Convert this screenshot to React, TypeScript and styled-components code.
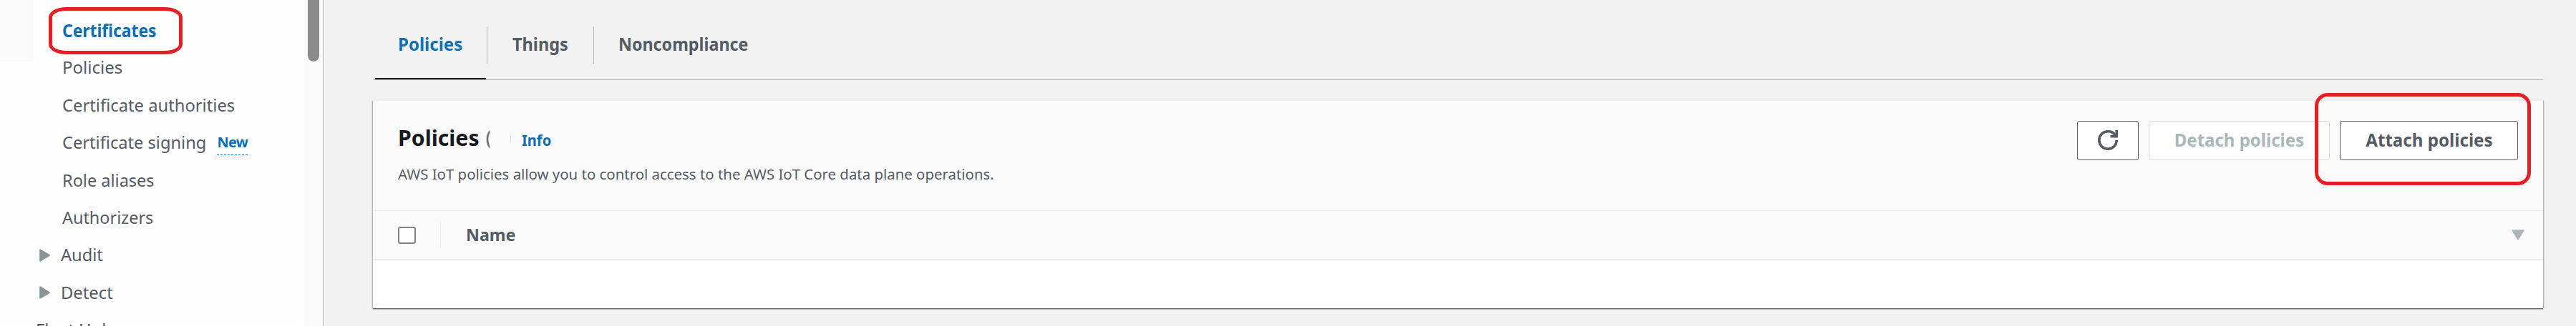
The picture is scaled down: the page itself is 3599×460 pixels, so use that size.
import React from 'react';
import styled, { createGlobalStyle, css } from 'styled-components';

const GlobalStyle = createGlobalStyle`
  *, *::before, *::after { box-sizing: border-box; }
  html, body { margin: 0; background: #fff; }
  body {
    height: 460px;
    overflow: hidden;
    font-family: 'Noto Sans', 'Open Sans', sans-serif;
    color: #545b64;
  }
`;

const Page = styled.div`
  display: flex;
  height: 456px;
  width: 3599px;
  overflow: hidden;
  position: relative;
`;

/* Sidebar */
const Sidebar = styled.aside`
  display: flex;
  flex: none;
  width: 452px;
  background: #fefefe;
  border-right: 1px solid #b4b6b6;
`;

const Rail = styled.div`
  flex: none;
  width: 46.5px;
  height: 86px;
  background: #fafafa;
`;

const Nav = styled.nav`
  flex: 1;
  padding-top: 16px;
`;

const NavItem = styled.a<{ $level: 'root' | 'group' | 'leaf'; $active?: boolean }>`
  display: flex;
  align-items: center;
  height: 52.4px;
  padding-left: ${({ $level }) => ({ root: 3, group: 8, leaf: 40.5 })[$level]}px;
  font-size: 24px;
  line-height: 52.4px;
  white-space: nowrap;
  ${({ $active }) =>
    $active &&
    css`
      font-size: 25px;
      font-weight: 700;
      color: #0a6eb4;
    `}
`;

const Label = styled.span<{ $stretch: number }>`
  display: inline-block;
  white-space: nowrap;
  transform: scaleX(${({ $stretch }) => $stretch});
  transform-origin: left center;
`;

const NewTag = styled.span`
  margin: 5px 0 0 12px;
  height: 31px;
  border-bottom: 1px dashed #1478b8;
  font-size: 20px;
  font-weight: 700;
  line-height: 26px;
  letter-spacing: -0.7px;
  color: #0a6eb4;
`;

const Caret = styled.svg`
  flex: none;
  width: 15px;
  height: 18px;
  margin-right: 15px;
  fill: #879596;
  stroke: #879596;
  stroke-width: 2;
  stroke-linejoin: round;
`;

const ScrollTrack = styled.div`
  flex: none;
  width: 26px;
  padding-left: 5px;
  background: #fafafa;
`;

const ScrollThumb = styled.div`
  width: 16px;
  height: 86px;
  background: #8b8b8b;
  border-radius: 0 0 8px 8px;
`;

/* Main column */
const Main = styled.main`
  flex: 1;
  min-width: 0;
  padding: 0 46px 0 69px;
  background: #f2f2f2;
`;

const Tabs = styled.div`
  display: flex;
  height: 112px;
  padding: 15px 0 0 3px;
  border-bottom: 1px solid #aab7b8;
`;

const Tab = styled.div<{ $width: number; $active?: boolean }>`
  flex: none;
  width: ${({ $width }) => $width}px;
  height: 96px;
  padding: 22px 0 0 34.5px;
  font-size: 24.5px;
  font-weight: 700;
  line-height: 50px;
  color: #545b64;
  ${({ $active }) =>
    $active &&
    css`
      padding-left: 32px;
      color: #0f72b6;
      border-bottom: 2px solid #16191f;
    `}
`;

const TabDivider = styled.div`
  flex: none;
  width: 1px;
  height: 52px;
  margin: 22px 0 0 1px;
  background: #aab7b8;
`;

const Card = styled.section`
  margin-top: 28px;
  height: 291px;
  background: #fff;
  border-top: 1px solid #eaeded;
  box-shadow: 0 1px 1px 0 rgba(0, 28, 36, 0.5), 1px 1px 2px 0 rgba(0, 28, 36, 0.3),
    -1px 1px 2px 0 rgba(0, 28, 36, 0.25);
`;

const CardHeader = styled.header`
  display: flex;
  justify-content: space-between;
  height: 154px;
  padding: 28px 35px 0 34.5px;
  background: #fafafa;
  border-bottom: 1px solid #eaeaea;
`;

const TitleRow = styled.div`
  display: flex;
  height: 48px;
`;

const Title = styled.h2`
  margin: 0;
  width: 123px;
  font-size: 31px;
  font-weight: 700;
  line-height: 47px;
  color: #16191f;
`;

const CounterEdge = styled.span`
  width: 5px;
  overflow: hidden;
  font-size: 29px;
  line-height: 46px;
  color: #687078;
`;

const CounterTail = styled.span`
  width: 1px;
  height: 10px;
  margin: 21px 15px 0 29.5px;
  background: #b5e0f5;
`;

const InfoLink = styled.a`
  font-size: 20.5px;
  font-weight: 700;
  line-height: 54px;
  color: #0f6cb2;
`;

const Description = styled.p`
  margin: 0;
  font-size: 20.5px;
  line-height: 53px;
`;

const Actions = styled.div`
  display: flex;
  gap: 14px;
`;

const Button = styled.button<{ $width: number; $muted?: boolean }>`
  display: flex;
  align-items: center;
  justify-content: center;
  width: ${({ $width }) => $width}px;
  height: 55px;
  padding: 0;
  background: #fff;
  border: 1px solid ${({ $muted }) => ($muted ? '#d5dbdb' : '#545b64')};
  border-radius: 3px;
  font: 700 25px/50px 'Noto Sans', 'Open Sans', sans-serif;
  color: ${({ $muted }) => ($muted ? '#aab7b8' : '#545b64')};
`;

const ButtonText = styled(Label)`
  height: 53px;
  transform-origin: center;
`;

const RefreshGlyph = styled.svg`
  width: 28px;
  height: 28px;
  margin-bottom: 1px;
  fill: none;
  stroke: #545b64;
  stroke-width: 2.1;
`;

const TableHead = styled.div`
  display: flex;
  align-items: center;
  height: 68px;
  padding: 0 26px 0 35px;
  background: #fafafa;
  border-bottom: 1px solid #eaeaea;
`;

const Checkbox = styled.span`
  width: 25px;
  height: 24px;
  background: #fff;
  border: 2px solid #7b8289;
  border-radius: 3px;
`;

const ColumnDivider = styled.span`
  width: 1px;
  height: 35px;
  margin: 0 34.5px 0 34px;
  background: #eaeded;
`;

const ColumnName = styled.span`
  flex: 1;
  margin-bottom: 2px;
  font-size: 24px;
  font-weight: 700;
`;

const SortCaret = styled.svg`
  width: 18px;
  height: 15px;
  fill: #aab7b8;
  stroke: #aab7b8;
  stroke-width: 2;
  stroke-linejoin: round;
`;

/* Callouts floating above the console */
const Callout = styled.div<{ $x: number; $y: number; $w: number; $h: number; $radius: string }>`
  position: absolute;
  left: ${({ $x }) => $x}px;
  top: ${({ $y }) => $y}px;
  width: ${({ $w }) => $w}px;
  height: ${({ $h }) => $h}px;
  border: 5px solid #e41f26;
  border-radius: ${({ $radius }) => $radius};
  pointer-events: none;
`;

const GroupCaret = () => (
  <Caret viewBox="0 0 15 18">
    <path d="M1.2 1.3v15.4L14 9z" />
  </Caret>
);

export default function App() {
  return (
    <>
      <GlobalStyle />
      <Page>
        <Sidebar>
          <Rail />
          <Nav>
            <NavItem $level="leaf" $active><Label $stretch={0.915}>Certificates</Label></NavItem>
            <NavItem $level="leaf"><Label $stretch={1}>Policies</Label></NavItem>
            <NavItem $level="leaf"><Label $stretch={0.99}>Certificate authorities</Label></NavItem>
            <NavItem $level="leaf">
              <Label $stretch={0.985}>Certificate signing</Label>
              <NewTag>New</NewTag>
            </NavItem>
            <NavItem $level="leaf"><Label $stretch={0.98}>Role aliases</Label></NavItem>
            <NavItem $level="leaf"><Label $stretch={0.975}>Authorizers</Label></NavItem>
            <NavItem $level="group"><GroupCaret /><Label $stretch={0.985}>Audit</Label></NavItem>
            <NavItem $level="group"><GroupCaret /><Label $stretch={0.99}>Detect</Label></NavItem>
            <NavItem $level="root"><Label $stretch={0.99}>Fleet Hub</Label></NavItem>
          </Nav>
          <ScrollTrack><ScrollThumb /></ScrollTrack>
        </Sidebar>

        <Main>
          <Tabs>
            <Tab $width={155} $active><Label $stretch={0.98}>Policies</Label></Tab>
            <TabDivider />
            <Tab $width={146.5}><Label $stretch={0.96}>Things</Label></Tab>
            <TabDivider />
            <Tab $width={250}><Label $stretch={0.95}>Noncompliance</Label></Tab>
          </Tabs>

          <Card>
            <CardHeader>
              <div>
                <TitleRow>
                  <Title><Label $stretch={0.975}>Policies</Label></Title>
                  <CounterEdge>(</CounterEdge>
                  <CounterTail />
                  <InfoLink><Label $stretch={0.98}>Info</Label></InfoLink>
                </TitleRow>
                <Description>
                  <Label $stretch={0.995}>
                    AWS IoT policies allow you to control access to the AWS IoT Core data plane operations.
                  </Label>
                </Description>
              </div>
              <Actions>
                <Button $width={86} aria-label="Refresh">
                  <RefreshGlyph viewBox="0 0 16 16">
                    <path d="M10 5h5V0" />
                    <path d="M15 8a6.957 6.957 0 0 1-7 7 6.957 6.957 0 0 1-7-7 6.957 6.957 0 0 1 7-7 6.87 6.87 0 0 1 6.3 4" />
                  </RefreshGlyph>
                </Button>
                <Button $width={253} $muted><ButtonText $stretch={0.96}>Detach policies</ButtonText></Button>
                <Button $width={249}><ButtonText $stretch={0.965}>Attach policies</ButtonText></Button>
              </Actions>
            </CardHeader>
            <TableHead>
              <Checkbox />
              <ColumnDivider />
              <ColumnName><Label $stretch={0.97}>Name</Label></ColumnName>
              <SortCaret viewBox="0 0 18 15">
                <path d="M1.4 1.2h15.2L9 13.6z" />
              </SortCaret>
            </TableHead>
          </Card>
        </Main>

        <Callout $x={68} $y={10} $w={187} $h={66} $radius="25px / 14px" />
        <Callout $x={3234} $y={130} $w={302} $h={129} $radius="18px" />
      </Page>
    </>
  );
}
